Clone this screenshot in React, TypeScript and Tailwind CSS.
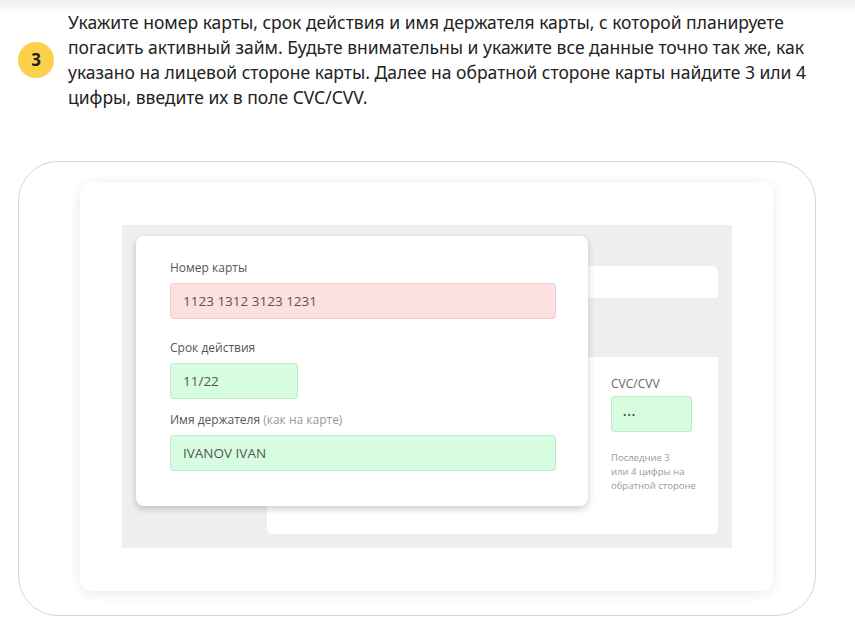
import React from 'react';

const cardFont = { fontFamily: '"Open Sans", "Noto Sans", sans-serif' };

const Field: React.FC<{ label: React.ReactNode; value: string; tone: 'red' | 'green'; width: string; className?: string }> = ({
  label,
  value,
  tone,
  width,
  className = '',
}) => (
  <div className={className}>
    <div className="text-[12px] leading-[16px] text-[#555]">{label}</div>
    <div
      className={`${width} mt-[7px] h-[36px] rounded-[3px] border flex items-center pl-[12px] text-[13.5px] text-[#555] ${
        tone === 'red' ? 'bg-[#fde1e1] border-[#efcfcf]' : 'bg-[#d6fde0] border-[#c3e9cc]'
      }`}
    >
      {value}
    </div>
  </div>
);

export default function App() {
  return (
    <div
      className="w-[855px] h-[632px] bg-[linear-gradient(to_bottom,#eeeeee,#ffffff_14px)] pt-[10px]"
      style={{ fontFamily: '"Noto Sans", sans-serif' }}
    >
      <div className="flex items-center">
        <div className="ml-[18px] w-[36px] h-[36px] rounded-full bg-[#fdd04b] flex items-center justify-center text-[17px] font-bold text-[#222]">
          3
        </div>
        <p className="ml-[14px] w-[770px] text-[17.5px] leading-[25px] text-[#222] whitespace-nowrap">
          Укажите номер карты, срок действия и имя держателя карты, с которой планируете
          <br />
          погасить активный займ. Будьте внимательны и укажите все данные точно так же, как
          <br />
          указано на лицевой стороне карты. Далее на обратной стороне карты найдите 3 или 4
          <br />
          цифры, введите их в поле CVC/CVV.
        </p>
      </div>

      <div className="ml-[18px] mt-[51px] w-[798px] h-[455px] rounded-[40px] border border-[#d4d4d4] pt-[20px] pl-[61px]">
        <div className="w-[693px] h-[409px] rounded-[12px] bg-white shadow-[0_2px_14px_rgba(0,0,0,0.09)] pt-[43px] pl-[42px]" style={cardFont}>
          <div className="w-[610px] h-[323px] bg-[#efefef] grid">
            {/* back side of the card */}
            <div className="col-start-1 row-start-1 ml-[145px] mt-[41px] w-[451px] h-[268px] bg-white rounded-[6px] flex flex-col overflow-hidden">
              <div className="h-[32px]" />
              <div className="h-[59px] bg-[#eeeeee]" />
              <div className="pl-[344px] pt-[20px]">
                <div className="text-[12px] leading-[14px] text-[#666]">CVC/CVV</div>
                <div className="mt-[5px] w-[81px] h-[36px] rounded-[3px] bg-[#d6fde0] border border-[#c3e9cc] flex items-center pl-[11px] text-[9px] leading-none text-[#444] tracking-[1px]">
                  •••
                </div>
                <div className="mt-[19px] text-[9.5px] leading-[14px] text-[#9a9a9a]">
                  Последние 3
                  <br />
                  или 4 цифры на
                  <br />
                  обратной стороне
                </div>
              </div>
            </div>

            {/* front side of the card */}
            <div className="col-start-1 row-start-1 z-10 ml-[14px] mt-[11px] w-[452px] h-[270px] bg-white rounded-[8px] shadow-[0_3px_7px_rgba(0,0,0,0.2)] pl-[34px] pt-[24px]">
              <Field label="Номер карты" value="1123 1312 3123 1231" tone="red" width="w-[386px]" />
              <Field label="Срок действия" value="11/22" tone="green" width="w-[128px]" className="mt-[21px]" />
              <Field
                label={
                  <>
                    Имя держателя <span className="text-[#999]">(как на карте)</span>
                  </>
                }
                value="IVANOV IVAN"
                tone="green"
                width="w-[386px]"
                className="mt-[13px]"
              />
            </div>
          </div>
        </div>
      </div>
    </div>
  );
}
